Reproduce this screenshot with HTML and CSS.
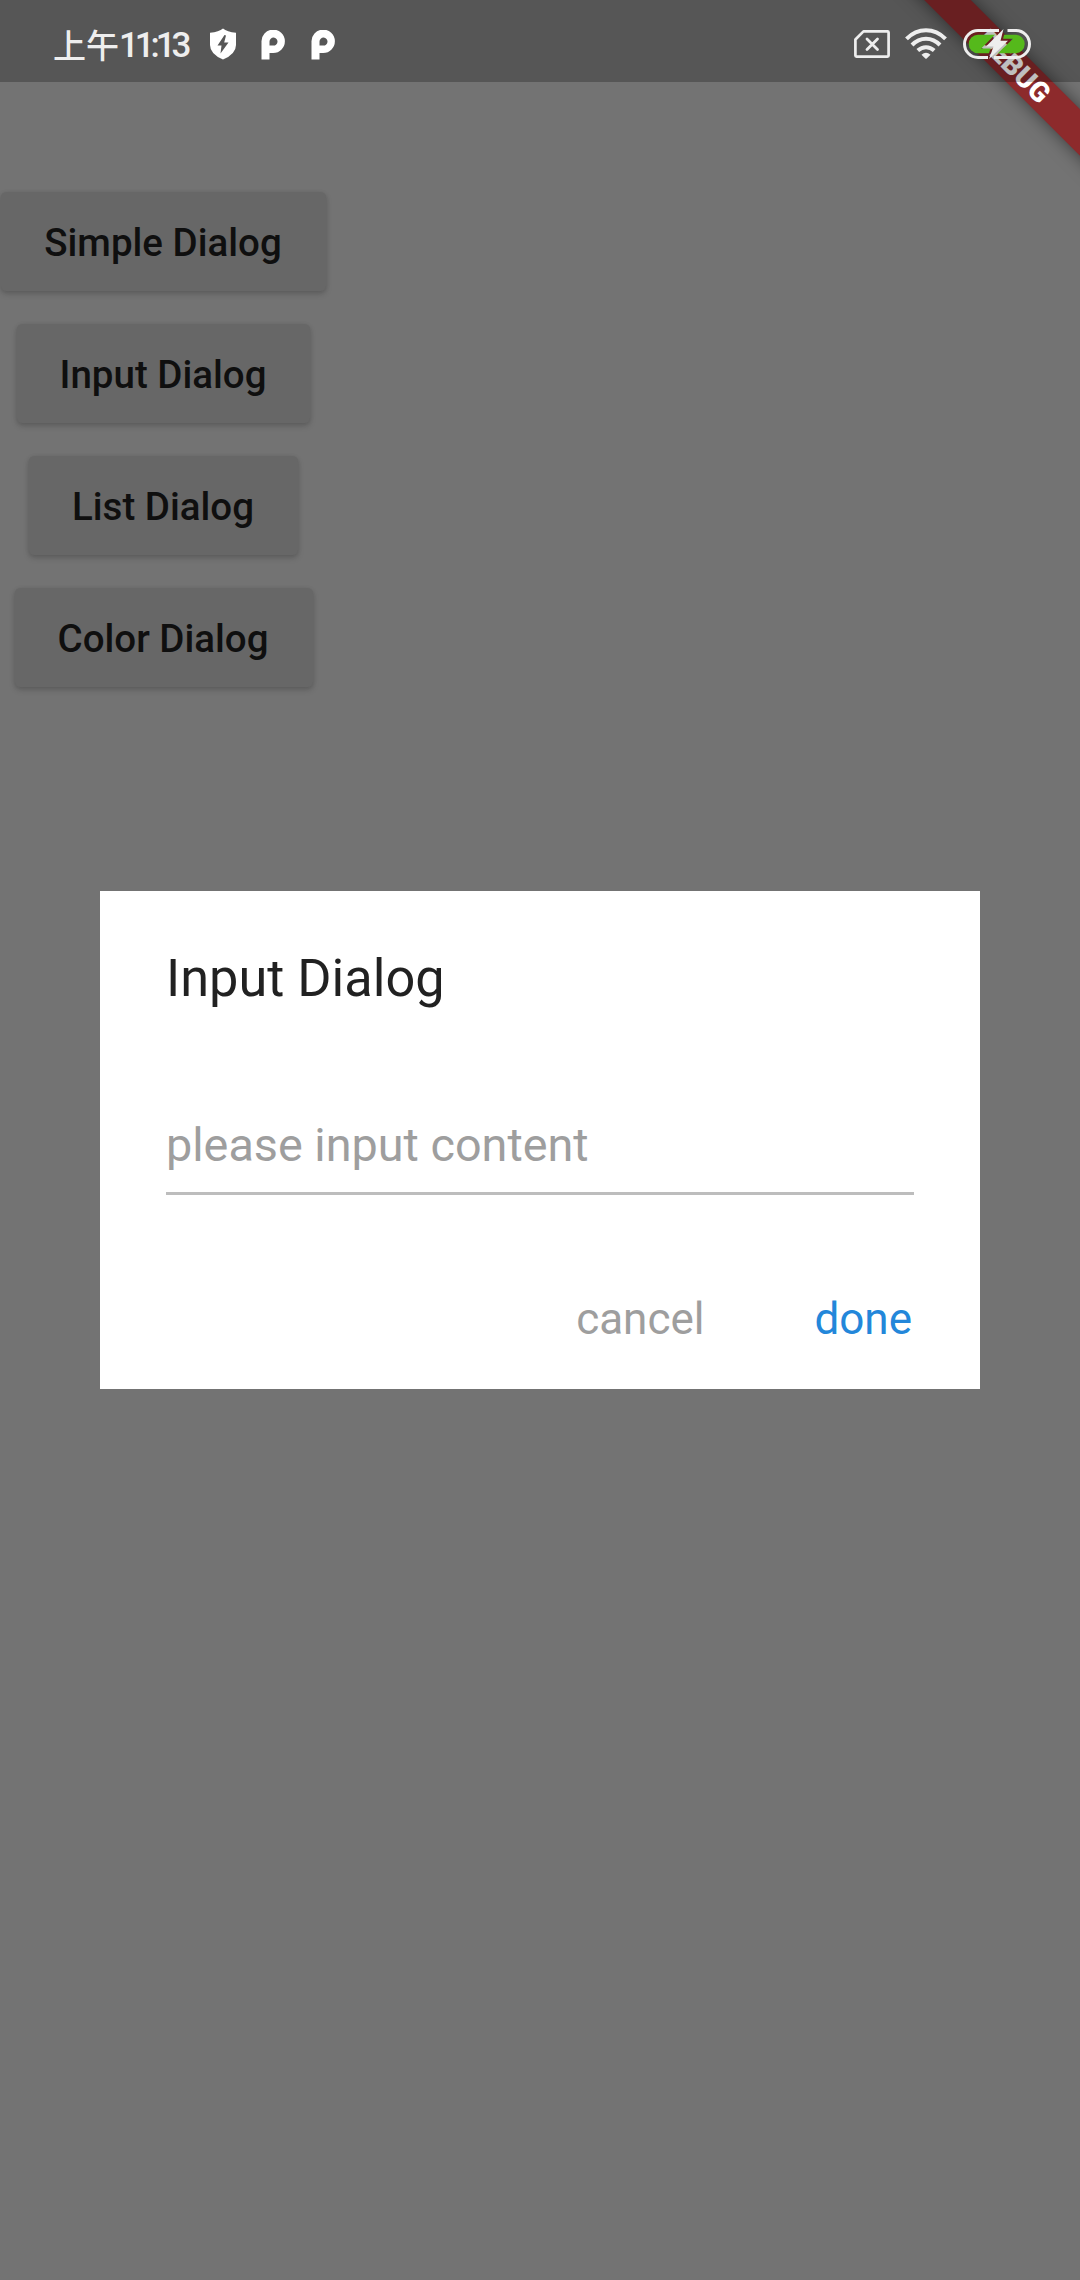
FILE: index.html
```html
<!DOCTYPE html>
<html lang="en">
<head>
<meta charset="utf-8">
<title>Dialogs</title>
<link rel="stylesheet" href="styles.css">
</head>
<body>
<main class="page">
  <button class="raised">Simple Dialog</button>
  <button class="raised">Input Dialog</button>
  <button class="raised">List Dialog</button>
  <button class="raised">Color Dialog</button>
</main>

<div class="overlay">
  <section class="dialog" role="dialog">
    <h1 class="dialog-title">Input Dialog</h1>
    <div class="field"><span class="hint">please input content</span></div>
    <div class="actions">
      <span class="action">cancel</span>
      <span class="action action-primary">done</span>
    </div>
  </section>
</div>

<div class="banner-corner"><div class="banner"><span class="banner-text">DEBUG</span></div></div>

<header class="status">
  <div class="status-group">
    <span class="clock"><span class="clock-period">上午</span><span class="clock-time">11:13</span></span>
    <svg class="shield" width="28" height="32" viewBox="0 0 28 32"><path fill="#fff" d="M14 .5 Q18 4 27 4.800V17Q27 26 14 31.500Q1 26 1 17V4.800Q10 4 14 .5Z"/><path fill="#565656" d="M15.500 7 8.500 17.500H12.500L11.500 25.500 19.500 14.500H15.200L17 7.500Z"/></svg>
    <svg class="app-mark" width="24" height="30" viewBox="0 0 24 30"><path fill="#fff" fill-rule="evenodd" d="M.5 29.500V12A11.700 11.700 0 1 1 12.200 23H8.500V29.500ZM8.500 15.500H12A4 4 0 1 0 8.500 11.500Z"/></svg>
    <svg class="app-mark" width="24" height="30" viewBox="0 0 24 30"><path fill="#fff" fill-rule="evenodd" d="M.5 29.500V12A11.700 11.700 0 1 1 12.200 23H8.500V29.500ZM8.500 15.500H12A4 4 0 1 0 8.500 11.500Z"/></svg>
  </div>
  <div class="status-group">
    <svg class="sim" width="36" height="28" viewBox="0 0 36 28"><path fill="none" stroke="#eee" stroke-width="2.700" stroke-linejoin="round" d="M9.500 1.400H33.500Q34.600 1.400 34.600 2.500V25.500Q34.600 26.600 33.500 26.600H2.500Q1.400 26.600 1.400 25.500V9.500Z"/><path stroke="#eee" stroke-width="2.800" stroke-linecap="round" d="M13 9 23.500 19.500M23.500 9 13 19.500"/></svg>
    <svg class="wifi" width="42" height="31" viewBox="0 0 42 31"><g fill="none" stroke="#eee" stroke-width="4"><path d="M1.500 10.800Q10 2.200 21 2.200T40.500 10.800"/><path d="M7 17Q13 10.700 21 10.700T35 17"/><path d="M12.800 22.500Q16.500 19.200 21 19.200T29.200 22.500"/></g><path fill="#eee" d="M16.500 26.700Q21 22.700 25.500 26.700L21.700 30.500Q21 31 20.300 30.500Z"/></svg>
    <svg class="battery" width="68" height="32" viewBox="0 0 68 32"><mask id="bolt-gap"><rect width="68" height="32" fill="#fff"/><path fill="#000" stroke="#000" stroke-width="4" d="M40.500 1 23 18.500H30.500L26 31 45 12.800H37.500Z"/></mask><rect x="5.700" y="6.700" width="56" height="18.600" rx="9.300" fill="#55b91b" mask="url(#bolt-gap)"/><path fill="none" stroke="#eee" stroke-width="3" d="M36 2.500H15A13.500 13.500 0 0 0 15 29.500H25M44.500 2.500H53A13.500 13.500 0 0 1 53 29.500H31"/><path fill="#eee" d="M40.500 1 23 18.500H30.500L26 31 45 12.800H37.500Z"/></svg>
  </div>
</header>
</body>
</html>
```
FILE: styles.css
```css
* { box-sizing: border-box; }

body {
  margin: 0;
  width: 1080px;
  height: 2280px;
  position: relative;
  overflow: hidden;
  background: #737373;
  font-family: Roboto, "Noto Sans CJK SC", sans-serif;
}

.page {
  width: 327px;
  padding-top: 192px;
  display: flex;
  flex-direction: column;
  align-items: center;
  gap: 33px;
}

.raised {
  height: 99px;
  padding: 2px 44px 0 43px;
  border: 0;
  border-radius: 5.5px;
  background: #676767;
  color: #0f0f0f;
  font: 500 38.5px/45px Roboto, sans-serif;
  white-space: nowrap;
  box-shadow: 0 3px 6px rgba(0, 0, 0, .15), 0 1px 4px rgba(0, 0, 0, .1);
}

.overlay {
  position: absolute;
  inset: 0;
  display: flex;
  align-items: center;
  justify-content: center;
}

.dialog {
  width: 880px;
  height: 498px;
  padding: 57px 66px 0;
  background: #fff;
}

.dialog-title {
  margin: 0;
  color: #212121;
  font-size: 52.25px;
  line-height: 61px;
  font-weight: 400;
}

.field {
  height: 99px;
  margin-top: 87px;
  padding-top: 22px;
  border-bottom: 3px solid #bdbdbd;
}

.hint {
  display: block;
  color: #9e9e9e;
  font-size: 46.75px;
  line-height: 55px;
}

.actions {
  display: flex;
  justify-content: flex-end;
  gap: 110px;
  margin: 98px 2px 0 0;
}

.action {
  color: #9e9e9e;
  font-size: 44px;
  line-height: 52px;
}

.action-primary { color: #2387da; }

.banner-corner {
  position: absolute;
  top: 0;
  right: 0;
  width: 240px;
  height: 240px;
  overflow: hidden;
}

.banner {
  position: absolute;
  left: 4px;
  top: 49.5px;
  width: 340px;
  height: 33px;
  background: #8d2a2c;
  box-shadow: 0 0 17px rgba(0, 0, 0, .5);
  transform: rotate(45deg);
  text-align: center;
}

.banner-text {
  color: #fff;
  font-size: 28px;
  line-height: 33px;
  font-weight: 900;
  display: block;
}

.status {
  position: absolute;
  inset: 0 0 auto;
  height: 82px;
  padding: 0 49px 0 53px;
  display: flex;
  justify-content: space-between;
  background: rgba(0, 0, 0, .25);
}

.status-group { display: flex; }

.clock {
  display: flex;
  width: 136px;
  height: 82px;
  color: #eee;
  line-height: 88px;
  font-weight: 500;
  white-space: nowrap;
}

.clock-period { font: 500 33px/88px "Noto Sans CJK SC", sans-serif; }
.clock-time { font-size: 35px; line-height: 91px; letter-spacing: -4.1px; }

.shield { margin: 28px 0 0 20px; }
.app-mark { margin: 30px 0 0 24px; }
.app-mark + .app-mark { margin-left: 26px; }
.sim { margin-top: 30px; }
.wifi { margin: 28px 0 0 15px; }
.battery { margin: 28px 0 0 16px; }
```
